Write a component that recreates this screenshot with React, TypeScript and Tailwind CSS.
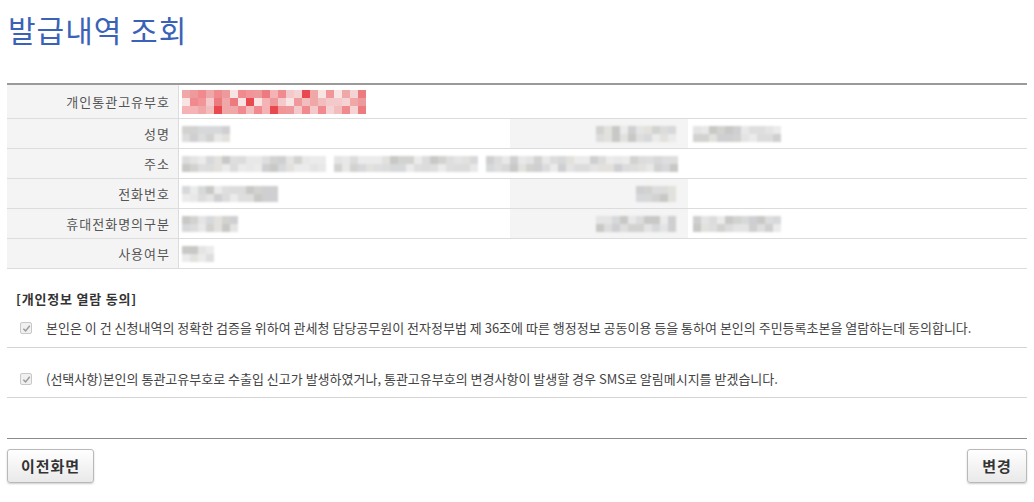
import type { ReactNode } from "react"

const PINK = ["#f3c9cb", "#f08a8f", "#f5d3d4", "#ee9a9c", "#f0a7a8", "#e9494e", "#f6b3b5", "#f2bdbd", "#ec7b80", "#f9e4e4", "#f19599"]
const GRAY = ["#dcdcdc", "#d2d2d0", "#e4e4e4", "#cfcfd2", "#e8e8e8", "#c8c8c6", "#dedede", "#ebebeb", "#d6d8da", "#e2e1dd"]

function Mosaic({ cols, rows, palette, seed, blur = true }: { cols: number; rows: number; palette: string[]; seed: number; blur?: boolean }) {
  const cells: string[] = []
  for (let i = 0; i < cols * rows; i++) {
    const h = Math.abs(Math.sin((i + 1) * 12.9898 + seed * 78.233) * 43758.5453)
    cells.push(palette[Math.floor((h % 1) * palette.length)])
  }
  return (
    <div
      className={`grid shrink-0 ${blur ? "blur-[1px]" : ""}`}
      style={{ gridTemplateColumns: `repeat(${cols}, 8px)`, gridAutoRows: "8px" }}
    >
      {cells.map((c, i) => (
        <div key={i} style={{ backgroundColor: c }} />
      ))}
    </div>
  )
}

function Row({ label, tall, children }: { label: string; tall?: boolean; children?: ReactNode }) {
  return (
    <div className={`flex border-b border-[#dcdcdc] ${tall ? "h-[34px]" : "h-[30px]"}`}>
      <div className="flex w-[172px] shrink-0 items-center justify-end border-r border-[#dcdcdc] bg-[#f4f4f4] pr-[8px] text-[13px] tracking-[1px] text-[#555]">
        {label}
      </div>
      <div className="flex min-w-0 flex-1 items-center pl-[3px]">{children}</div>
    </div>
  )
}

function Check() {
  return (
    <span className="flex h-[12px] w-[12px] shrink-0 items-center justify-center rounded-[2px] border border-[#c8c8c8] bg-[#f0f0f0]">
      <svg viewBox="0 0 10 10" className="h-[9px] w-[9px]">
        <path d="M1.5 5.2 L4 7.6 L8.6 2" fill="none" stroke="#9a9a9a" strokeWidth="1.6" />
      </svg>
    </span>
  )
}

export default function App() {
  return (
    <div className="h-[502px] w-[1034px] overflow-hidden bg-white font-['Noto_Sans_CJK_KR','Noto_Sans',sans-serif] text-[#333]">
      <div className="px-[7px]">
        <h1 className="pl-[1px] pt-[10px] text-[30px] leading-[38px] tracking-[1px] text-[#3a62b6]">발급내역 조회</h1>

        <div className="mt-[35px] border-t-2 border-[#9a9a9a]">
          <Row label="개인통관고유부호" tall>
            <Mosaic cols={23} rows={3} palette={PINK} seed={3} blur={false} />
          </Row>
          <Row label="성명">
            <Mosaic cols={6} rows={2} palette={GRAY} seed={5} />
            <div className="ml-[280px] flex h-full w-[178px] shrink-0 items-center justify-end bg-[#f4f4f4] pr-[12px]">
              <Mosaic cols={10} rows={2} palette={GRAY} seed={7} />
            </div>
            <div className="ml-[5px]">
              <Mosaic cols={11} rows={2} palette={GRAY} seed={9} />
            </div>
          </Row>
          <Row label="주소">
            <div className="flex gap-[8px]">
              <Mosaic cols={18} rows={2} palette={GRAY} seed={11} />
              <Mosaic cols={18} rows={2} palette={GRAY} seed={12} />
              <Mosaic cols={24} rows={2} palette={GRAY} seed={13} />
            </div>
          </Row>
          <Row label="전화번호">
            <Mosaic cols={12} rows={2} palette={GRAY} seed={15} />
            <div className="ml-[232px] flex h-full w-[178px] shrink-0 items-center justify-end bg-[#f4f4f4] pr-[12px]">
              <Mosaic cols={5} rows={2} palette={GRAY} seed={17} />
            </div>
          </Row>
          <Row label="휴대전화명의구분">
            <Mosaic cols={7} rows={2} palette={GRAY} seed={19} />
            <div className="ml-[272px] flex h-full w-[178px] shrink-0 items-center justify-end bg-[#f4f4f4] pr-[12px]">
              <Mosaic cols={10} rows={2} palette={GRAY} seed={21} />
            </div>
            <div className="ml-[5px]">
              <Mosaic cols={11} rows={2} palette={GRAY} seed={23} />
            </div>
          </Row>
          <Row label="사용여부">
            <Mosaic cols={4} rows={2} palette={GRAY} seed={25} />
          </Row>
        </div>

        <div className="mt-[22px] pl-[9px] text-[13px] font-bold leading-[16px] tracking-[0.8px] text-[#333]">[개인정보 열람 동의]</div>

        <div className="mt-[13px] flex h-[28px] items-start gap-[14px] border-b border-[#d4d4d4] pl-[13px] pt-[2px] text-[13px] leading-[16px] text-[#444]">
          <Check />
          <span className="-mt-[2px]">
            본인은 이 건 신청내역의 정확한 검증을 위하여 관세청 담당공무원이 전자정부법 제 36조에 따른 행정정보 공동이용 등을 통하여 본인의 주민등록초본을 열람하는데 동의합니다.
          </span>
        </div>
        <div className="flex h-[50px] items-start gap-[14px] border-b border-[#d4d4d4] pl-[13px] pt-[25px] text-[13px] leading-[16px] text-[#444]">
          <Check />
          <span className="-mt-[2px]">
            (선택사항)본인의 통관고유부호로 수출입 신고가 발생하였거나, 통관고유부호의 변경사항이 발생할 경우 SMS로 알림메시지를 받겠습니다.
          </span>
        </div>

        <div className="mt-[40px] border-t border-[#8c8c8c]" />

        <div className="mt-[10px] flex justify-between">
          <button className="h-[34px] w-[87px] rounded-[3px] border border-[#b9b9b9] bg-gradient-to-b from-white to-[#e9e9e9] text-[15px] font-bold tracking-[1px] text-[#333] shadow-[0_1px_2px_rgba(0,0,0,0.2)]">
            이전화면
          </button>
          <button className="h-[34px] w-[60px] rounded-[3px] border border-[#b9b9b9] bg-gradient-to-b from-white to-[#e9e9e9] text-[15px] font-bold tracking-[1px] text-[#333] shadow-[0_1px_2px_rgba(0,0,0,0.2)]">
            변경
          </button>
        </div>
      </div>
    </div>
  )
}
